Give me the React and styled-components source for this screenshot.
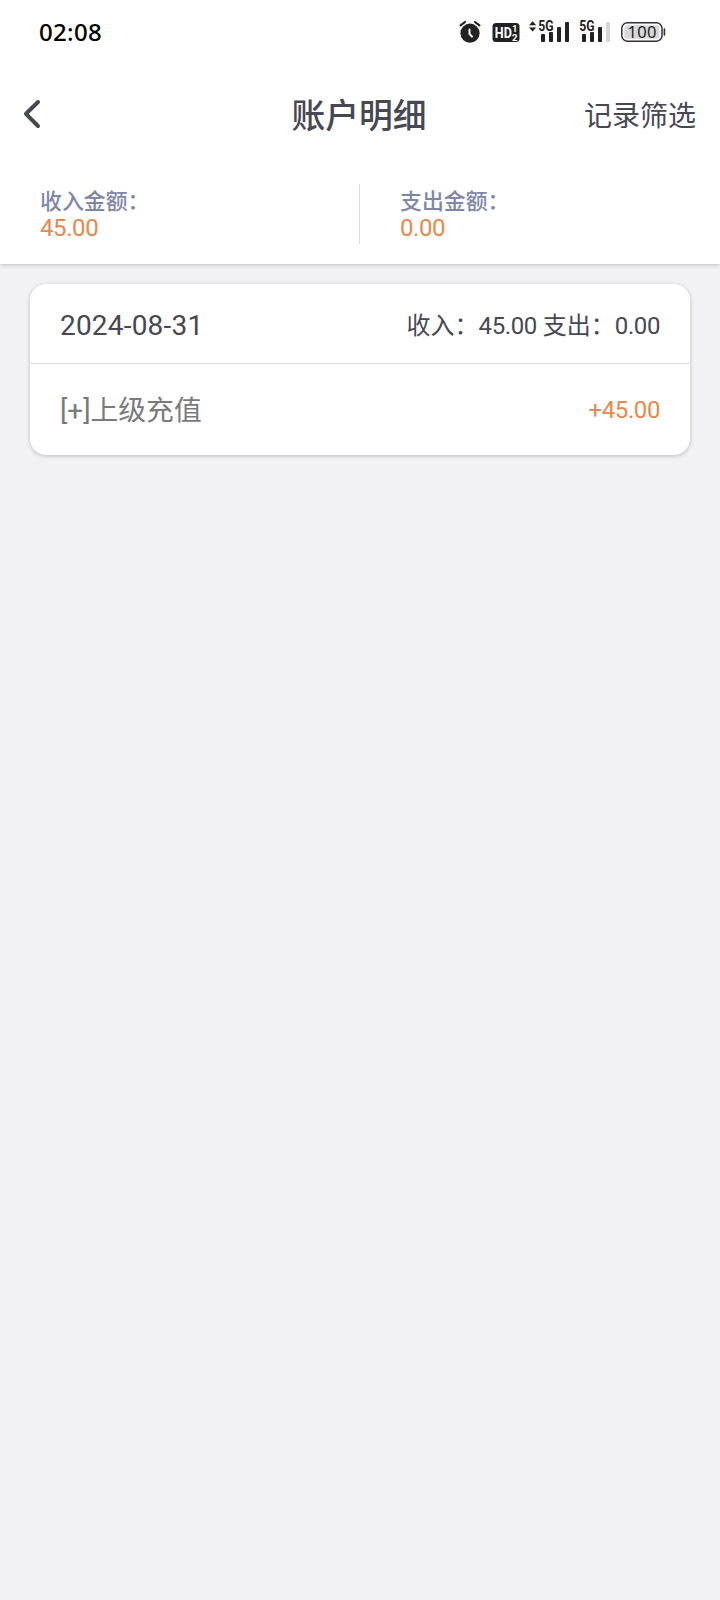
import styled, { createGlobalStyle } from 'styled-components';

const App = () => {
  return (
    <>
      <GlobalStyle />
      <Page>
        <Top>
          <StatusBar>
            <Clock>02:08</Clock>
            <StatusIcons>
              <AlarmIcon />
              <HdIcon />
              <SignalIcon arrows bars={4} />
              <SignalIcon bars={3} />
              <BatteryIcon />
            </StatusIcons>
          </StatusBar>
          <NavBar>
            <BackButton aria-label="返回">
              <svg width="20" height="32" viewBox="0 0 20 32">
                <path
                  d="M16 4 L4 15.8 L16 28"
                  fill="none"
                  stroke="#464852"
                  strokeWidth="4"
                  strokeLinecap="round"
                  strokeLinejoin="round"
                />
              </svg>
            </BackButton>
            <PageTitle>账户明细</PageTitle>
            <FilterButton>记录筛选</FilterButton>
          </NavBar>
          <Summary>
            <SummaryItem>
              <SummaryLabel>收入金额：</SummaryLabel>
              <Amount>45.00</Amount>
            </SummaryItem>
            <Divider />
            <SummaryItem>
              <SummaryLabel>支出金额：</SummaryLabel>
              <Amount>0.00</Amount>
            </SummaryItem>
          </Summary>
        </Top>
        <Card>
          <CardHeader>
            <DateText>2024-08-31</DateText>
            <DayTotal>
              收入：<Num>45.00</Num> 支出：<Num>0.00</Num>
            </DayTotal>
          </CardHeader>
          <CardRow>
            <RowName>[+]上级充值</RowName>
            <Amount>+45.00</Amount>
          </CardRow>
        </Card>
      </Page>
    </>
  );
};

export default App;

const AlarmIcon = () => (
  <svg width="24" height="26" viewBox="0 0 24 26">
    <circle cx="12" cy="14.2" r="9.6" fill="#222" />
    <path d="M2.6 6.4 L7 3 M21.4 6.4 L17 3" stroke="#222" strokeWidth="2.2" strokeLinecap="round" />
    <path d="M11.5 10.4 V14.8 L14 17.6" fill="none" stroke="#fff" strokeWidth="2" strokeLinecap="round" />
  </svg>
);

const HdIcon = () => (
  <svg width="28" height="26" viewBox="0 0 28 26">
    <rect x="0.5" y="4" width="27" height="19" rx="3.5" fill="#222" />
    <IconText x="2.8" y="18.8" fontSize="14.5" textLength="17" lengthAdjust="spacingAndGlyphs" fill="#fff">
      HD
    </IconText>
    <IconText x="20" y="12.8" fontSize="9.5" fill="#fff">
      1
    </IconText>
    <IconText x="20" y="21.6" fontSize="9.5" fill="#fff">
      2
    </IconText>
  </svg>
);

const barShapes = [
  { x: 12, y: 15 },
  { x: 20, y: 13 },
  { x: 28, y: 8 },
  { x: 36, y: 3 },
];

const SignalIcon = ({ arrows, bars }) => (
  <svg width="41" height="26" viewBox="0 0 41 26">
    {arrows && <path d="M0 6.2 L3.6 2.2 L7.2 6.2 Z M0 8.4 H7.2 L3.6 12.4 Z" fill="#222" />}
    <IconText x="9.2" y="12.2" fontSize="14" textLength="15.4" lengthAdjust="spacingAndGlyphs" fill="#222">
      5G
    </IconText>
    {barShapes.map((bar, i) => (
      <rect
        key={bar.x}
        x={bar.x}
        y={bar.y}
        width="4"
        height={23 - bar.y}
        rx="0.8"
        fill={i < bars ? '#222' : '#d6d6d6'}
      />
    ))}
  </svg>
);

const BatteryIcon = () => (
  <svg width="46" height="26" viewBox="0 0 46 26">
    <rect x="1.8" y="3.8" width="40.2" height="18.4" rx="5.5" fill="#fff" stroke="#333" strokeWidth="1.5" />
    <rect x="4.4" y="6.2" width="35" height="13.6" rx="3" fill="#d8d8d8" />
    <path d="M44.4 10 V16" stroke="#333" strokeWidth="1.6" strokeLinecap="round" />
    <BatteryText x="22" y="18.8" textAnchor="middle" textLength="29">
      100
    </BatteryText>
  </svg>
);

const GlobalStyle = createGlobalStyle`
  * {
    box-sizing: border-box;
  }

  body {
    margin: 0;
    background-color: #f2f2f4;
    font-family: Roboto, 'Noto Sans CJK SC', sans-serif;
    color: #464852;
  }

  button {
    padding: 0;
    border: 0;
    background: none;
    font-family: inherit;
    color: inherit;
  }

  svg {
    display: block;
  }
`;

const IconText = styled.text`
  font-family: Roboto, sans-serif;
  font-weight: 700;
`;

const BatteryText = styled.text`
  font-family: 'Noto Sans', sans-serif;
  font-size: 16.5px;
  fill: #222;
`;

const Page = styled.div`
  width: 720px;
  min-height: 1600px;
  background-color: #f2f2f4;
`;

const Top = styled.header`
  height: 264px;
  background-color: #fff;
  box-shadow: 0 1px 4px rgba(0, 0, 0, 0.22);
`;

const StatusBar = styled.div`
  display: flex;
  align-items: center;
  justify-content: space-between;
  height: 64px;
  padding: 0 54px 0 39px;
`;

const Clock = styled.div`
  font-family: 'Noto Sans', sans-serif;
  font-size: 24px;
  font-weight: 500;
  line-height: 32px;
  letter-spacing: 0.3px;
  color: #000;
`;

const StatusIcons = styled.div`
  display: flex;
  align-items: center;

  svg:nth-child(2) {
    margin-left: 10px;
  }

  svg:nth-child(3) {
    margin-left: 9px;
  }

  svg:nth-child(5) {
    margin-left: 9px;
  }
`;

const NavBar = styled.nav`
  display: grid;
  grid-template-columns: 1fr auto 1fr;
  align-items: center;
  height: 102px;
  padding: 0 24px 2px 22px;
`;

const BackButton = styled.button`
  justify-self: start;
`;

const PageTitle = styled.h1`
  margin: 0;
  padding-top: 6px;
  font-size: 33.8px;
  font-weight: 500;
  line-height: 48px;
`;

const FilterButton = styled.button`
  justify-self: end;
  padding-top: 6px;
  font-size: 28px;
  line-height: 40px;
`;

const Summary = styled.section`
  display: flex;
  align-items: center;
  height: 96px;
`;

const SummaryItem = styled.div`
  padding-left: 40px;

  &:first-child {
    width: 359px;
  }
`;

const SummaryLabel = styled.div`
  padding-top: 2px;
  margin-bottom: -2px;
  font-size: 21.9px;
  font-weight: 500;
  line-height: 28px;
  color: #7f87a9;
`;

const Divider = styled.div`
  width: 1px;
  height: 60px;
  background-color: #dcdcdc;
`;

const Amount = styled.div`
  font-size: 24px;
  line-height: 28px;
  letter-spacing: -0.4px;
  color: #e98849;
`;

const Card = styled.section`
  margin: 20px 30px 0;
  border-radius: 16px;
  background-color: #fff;
  box-shadow: 0 1px 4px rgba(0, 0, 0, 0.22);
`;

const CardHeader = styled.div`
  display: flex;
  align-items: center;
  justify-content: space-between;
  height: 80px;
  padding: 2px 30px 0;
  border-bottom: 1px solid #dcdcdc;
`;

const DateText = styled.div`
  padding-top: 2px;
  font-size: 28px;
  letter-spacing: 0.2px;
`;

const DayTotal = styled.div`
  padding-bottom: 3px;
  font-size: 24px;
`;

const Num = styled.span`
  letter-spacing: -0.4px;
`;

const CardRow = styled.div`
  display: flex;
  align-items: center;
  justify-content: space-between;
  height: 91px;
  padding: 0 30px;
`;

const RowName = styled.div`
  padding-bottom: 3px;
  font-size: 27.8px;
  color: #7a7a7a;
`;
